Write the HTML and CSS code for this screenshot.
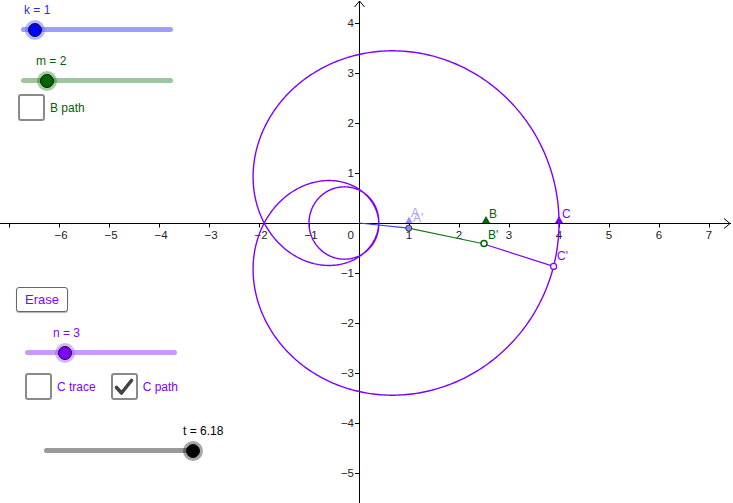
FILE: index.html
```html
<!DOCTYPE html>
<html>
<head>
<meta charset="utf-8">
<link rel="stylesheet" href="styles.css">
</head>
<body>
<div class="app">
  <svg class="graph" width="733" height="503" viewBox="0 0 733 503">
    <g class="axes" stroke="#000" stroke-width="1" fill="none">
      <line x1="0" y1="223.5" x2="731" y2="223.5"/>
      <polyline points="724,218.5 730,223.5 724,228.5"/>
      <line x1="359.5" y1="503" x2="359.5" y2="1"/>
      <polyline points="354.5,7 359.5,1 364.5,7"/>
      <g id="ticks"></g>
    </g>
    <g class="xlabels">
      <text x="61" y="239">−6</text>
      <text x="111" y="239">−5</text>
      <text x="161" y="239">−4</text>
      <text x="211" y="239">−3</text>
      <text x="261" y="239">−2</text>
      <text x="311" y="239">−1</text>
      <text x="409" y="239">1</text>
      <text x="459" y="239">2</text>
      <text x="509" y="239">3</text>
      <text x="559" y="239">4</text>
      <text x="609" y="239">5</text>
      <text x="659" y="239">6</text>
      <text x="709" y="239">7</text>
    </g>
    <g class="ylabels">
      <text x="354" y="27">4</text>
      <text x="354" y="77">3</text>
      <text x="354" y="127">2</text>
      <text x="354" y="177">1</text>
      <text x="354" y="239">0</text>
      <text x="354" y="277">−1</text>
      <text x="354" y="327">−2</text>
      <text x="354" y="377">−3</text>
      <text x="354" y="427">−4</text>
      <text x="354" y="477">−5</text>
    </g>
    <path id="curve" fill="none" stroke="#8000ff" stroke-width="1.4"/>
    <line x1="359" y1="223" x2="408.7" y2="228.2" stroke="#3d3dff" stroke-width="1.2"/>
    <line x1="408.7" y1="228.2" x2="482.1" y2="243.5" stroke="#1a7a1a" stroke-width="1.2"/>
    <line x1="482.1" y1="243.5" x2="553.6" y2="266.4" stroke="#8000ff" stroke-width="1.2"/>
    <polygon points="405.5,223 409,216.5 412.5,223" fill="#9d8cff"/>
    <polygon points="482,223 486,216 490,223" fill="#006400"/>
    <polygon points="555,223 559,216 563,223" fill="#8000ff"/>
    <circle cx="408.7" cy="228.2" r="3" fill="#8c8cff" stroke="#333" stroke-width="1"/>
    <circle cx="484" cy="243.5" r="3" fill="#fff" stroke="#006400" stroke-width="1.5"/>
    <circle cx="553.6" cy="266.4" r="3" fill="#fff" stroke="#8000ff" stroke-width="1.2"/>
    <g class="plabel">
      <text x="411" y="217" fill="#a9a0ff">A</text>
      <text x="413" y="222" fill="#a9a0ff">A'</text>
      <text x="489" y="218" fill="#006400">B</text>
      <text x="562" y="218" fill="#8000ff">C</text>
      <text x="488" y="239" fill="#006400">B'</text>
      <text x="557" y="260" fill="#8000ff">C'</text>
    </g>
  </svg>

  <div class="slider sl-k">
    <div class="slabel c-blue">k = 1</div>
    <div class="track t-blue"><span class="knob k-blue" style="left:14px"></span></div>
  </div>
  <div class="slider sl-m">
    <div class="slabel c-green">m = 2</div>
    <div class="track t-green"><span class="knob k-green" style="left:26px"></span></div>
  </div>
  <label class="check ck-b"><span class="box"></span><span class="ctext c-green">B path</span></label>

  <button class="erase">Erase</button>

  <div class="slider sl-n">
    <div class="slabel c-purple">n = 3</div>
    <div class="track t-purple"><span class="knob k-purple" style="left:40px"></span></div>
  </div>
  <div class="checks">
    <label class="check"><span class="box"></span><span class="ctext c-purple">C trace</span></label>
    <label class="check"><span class="box checked"><svg width="22" height="22" viewBox="0 0 22 22"><path d="M3.5 11.5 L8.5 17 L18.5 4.5" fill="none" stroke="#444" stroke-width="3.6" stroke-linecap="round" stroke-linejoin="round"/></svg></span><span class="ctext c-purple">C path</span></label>
  </div>

  <div class="slider sl-t">
    <div class="slabel c-black">t = 6.18</div>
    <div class="track t-gray"><span class="knob k-black" style="left:149px"></span></div>
  </div>
</div>
<script src="script.js"></script>
</body>
</html>
```

FILE: styles.css
```css
html, body {
  margin: 0;
  padding: 0;
  background: #fff;
}
body {
  font-family: "Liberation Sans", Arial, sans-serif;
}
.app {
  position: relative;
  width: 733px;
  height: 503px;
  overflow: hidden;
}
.graph {
  display: block;
}
.xlabels text {
  font-family: "Liberation Sans", Arial, sans-serif;
  font-size: 11.5px;
  fill: #222;
  text-anchor: middle;
}
.ylabels text {
  font-family: "Liberation Sans", Arial, sans-serif;
  font-size: 11.5px;
  fill: #222;
  text-anchor: end;
}
.plabel text {
  font-family: "Liberation Sans", Arial, sans-serif;
  font-size: 12px;
}

.slider {
  position: absolute;
  width: 152px;
}
.slabel {
  font-size: 12px;
  line-height: 14px;
  height: 14px;
  white-space: nowrap;
}
.track {
  position: relative;
  height: 5px;
  border-radius: 3px;
  margin-top: 10px;
}
.knob {
  position: absolute;
  top: 50%;
  width: 12px;
  height: 12px;
  margin: -7px 0 0 -7px;
  border-radius: 50%;
  border: 1px solid #111;
}
.sl-k { left: 21px; top: 3px; }
.sl-k .slabel { padding-left: 3px; }
.sl-m { left: 21px; top: 54px; }
.sl-m .slabel { padding-left: 15px; }
.sl-n { left: 25px; top: 326px; }
.sl-n .slabel { padding-left: 28px; }
.sl-t { left: 44px; top: 424px; width: 150px; }
.sl-t .slabel { padding-left: 139px; }

.c-blue { color: #2b2bff; }
.c-green { color: #006400; }
.c-purple { color: #8000ff; }
.c-black { color: #000; }

.t-blue { background: #9d9dff; }
.t-green { background: #9cc79c; }
.t-purple { background: #c999ff; }
.t-gray { background: #999; }

.k-blue { background: #0000ff; box-shadow: 0 0 0 3px rgba(90, 90, 255, 0.45); }
.k-green { background: #006400; box-shadow: 0 0 0 3px rgba(0, 110, 0, 0.35); }
.k-purple { background: #8000ff; box-shadow: 0 0 0 3px rgba(160, 90, 255, 0.45); }
.k-black { background: #000; box-shadow: 0 0 0 3px rgba(0, 0, 0, 0.35); }

.check {
  display: flex;
  align-items: center;
  gap: 5px;
}
.ck-b {
  position: absolute;
  left: 18px;
  top: 94px;
}
.box {
  width: 23px;
  height: 23px;
  border: 2px solid #8a8a8a;
  border-radius: 3px;
  background: #fff;
  display: flex;
  align-items: center;
  justify-content: center;
}
.ctext {
  font-size: 12px;
  padding-top: 1px;
}
.checks {
  position: absolute;
  left: 25px;
  top: 373px;
  display: flex;
  gap: 15px;
}

.erase {
  position: absolute;
  left: 16px;
  top: 287px;
  width: 52px;
  height: 25px;
  padding: 0;
  background: #fff;
  border: 1px solid #666;
  border-radius: 3px;
  box-shadow: 0 1px 1px rgba(0,0,0,0.3);
  color: #8000ff;
  font-family: "Liberation Sans", Arial, sans-serif;
  font-size: 13px;
}
```

FILE: script.js
```js
(function () {
  var ox = 359, oy = 223, s = 50;
  var p = document.getElementById('curve');
  var d = '';
  var N = 1000;
  for (var i = 0; i <= N; i++) {
    var t = i / N * 2 * Math.PI;
    var x = Math.cos(t) + 1.5 * Math.cos(2 * t) + 1.5 * Math.cos(3 * t);
    var y = Math.sin(t) + 1.5 * Math.sin(2 * t) + 1.5 * Math.sin(3 * t);
    d += (i ? 'L' : 'M') + (ox + s * x).toFixed(2) + ' ' + (oy - s * y).toFixed(2);
  }
  p.setAttribute('d', d);

  var g = document.getElementById('ticks');
  var ns = 'http://www.w3.org/2000/svg';
  var k, l;
  for (k = -7; k <= 7; k++) {
    if (k === 0) continue;
    l = document.createElementNS(ns, 'line');
    l.setAttribute('x1', ox + s * k + 0.5);
    l.setAttribute('x2', ox + s * k + 0.5);
    l.setAttribute('y1', 223.5);
    l.setAttribute('y2', 227.5);
    g.appendChild(l);
  }
  for (k = -5; k <= 4; k++) {
    if (k === 0) continue;
    l = document.createElementNS(ns, 'line');
    l.setAttribute('x1', 355);
    l.setAttribute('x2', 359.5);
    l.setAttribute('y1', oy - s * k + 0.5);
    l.setAttribute('y2', oy - s * k + 0.5);
    g.appendChild(l);
  }
})();
```
